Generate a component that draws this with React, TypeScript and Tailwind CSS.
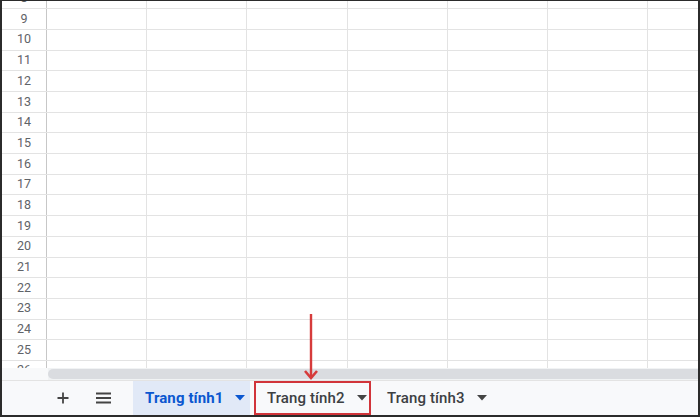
import { ReactNode } from "react";

const ROWS = [8, 9, 10, 11, 12, 13, 14, 15, 16, 17, 18, 19, 20, 21, 22, 23, 24, 25, 26];
const COLS = 6;

function Caret() {
  return (
    <svg width="10" height="6" viewBox="0 0 10 6" className="shrink-0">
      <path d="M0 0h10L5 5.5z" fill="currentColor" />
    </svg>
  );
}

type TabProps = {
  label: string;
  active?: boolean;
  marked?: boolean;
  children?: ReactNode;
};

function Tab({ label, active, marked, children }: TabProps) {
  return (
    <div
      className={`relative h-full flex items-center gap-[12px] ${
        active ? "bg-[#e1e9f7] text-[#0b57d0] font-bold w-[117px] pl-[12px]" : "text-[#3c4043] font-medium"
      } ${marked ? "w-[117px] pl-[11px] border-2 border-[#d1343a] ml-[4px]" : ""} ${
        !active && !marked ? "pl-[16px]" : ""
      }`}
    >
      <span className="text-[15px] tracking-[0.1px] whitespace-nowrap">{label}</span>
      <span className={active ? "text-[#0b57d0]" : "text-[#444]"}>
        <Caret />
      </span>
      {children}
    </div>
  );
}

export default function App() {
  return (
    <div
      className="w-[700px] h-[417px] bg-white border-t border-l-2 border-r-2 border-b-2 border-[#2b2b2b] flex flex-col overflow-hidden"
      style={{ fontFamily: "Roboto, 'Liberation Sans', sans-serif" }}
    >
      {/* sheet grid */}
      <div className="h-[367px] overflow-hidden">
        <div className="-mt-[12.4px]">
          {ROWS.map((n) => (
            <div key={n} className="flex h-[20.7px] border-b border-[#e3e3e3]">
              <div className="w-[45px] shrink-0 border-r border-[#c7c7c7] flex items-center justify-center text-[12.5px] text-[#5f6368]">
                {n}
              </div>
              {Array.from({ length: COLS }).map((_, i) => (
                <div key={i} className="w-[100.2px] shrink-0 border-r border-[#e3e3e3]" />
              ))}
            </div>
          ))}
        </div>
      </div>

      {/* horizontal scrollbar */}
      <div className="h-[13px] flex bg-[#f1f3f4] border-b border-[#e3e3e3]">
        <div className="w-[46px] shrink-0 bg-[#f8f9fa]" />
        <div className="flex-1 my-[1px] rounded-l-full bg-[#dadce0]" />
      </div>

      {/* sheet tabs */}
      <div className="flex-1 flex items-stretch bg-[#f8f9fb]">
        <div className="w-[46px] shrink-0" />
        <div className="w-[30px] flex items-center justify-center text-[#444]">
          <svg width="12" height="12" viewBox="0 0 12 12">
            <path d="M6 0.5v11M0.5 6h11" stroke="currentColor" strokeWidth="1.8" />
          </svg>
        </div>
        <div className="w-[50px] flex items-center justify-center text-[#444]">
          <svg width="15" height="12" viewBox="0 0 15 12">
            <path d="M0 1.5h15M0 6h15M0 10.5h15" stroke="currentColor" strokeWidth="1.8" />
          </svg>
        </div>
        <div className="w-[5px]" />
        <Tab label="Trang tính1" active />
        <Tab label="Trang tính2" marked>
          <svg
            width="14"
            height="68"
            viewBox="0 0 14 68"
            className="absolute left-[48px] -top-[69px] text-[#d63b3b]"
          >
            <path d="M7 0v64" stroke="currentColor" strokeWidth="2.4" />
            <path d="M1 57l6 7 6-7" fill="none" stroke="currentColor" strokeWidth="2.6" />
          </svg>
        </Tab>
        <Tab label="Trang tính3" />
      </div>
    </div>
  );
}
